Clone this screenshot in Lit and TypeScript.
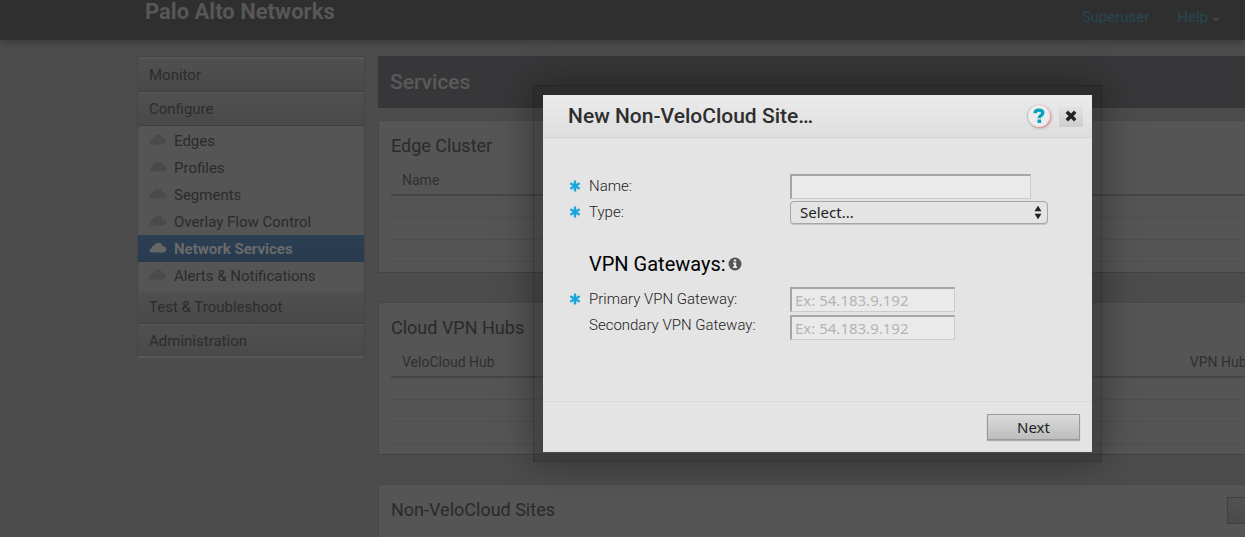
import { LitElement, html, css, svg } from "lit";
import { customElement, state } from "lit/decorators.js";

interface NavItem {
  label: string;
  active?: boolean;
}

interface Card {
  title: string;
  columns: string[];
  rows: number;
  action?: string;
}

const CONFIGURE_ITEMS: NavItem[] = [
  { label: "Edges" },
  { label: "Profiles" },
  { label: "Segments" },
  { label: "Overlay Flow Control" },
  { label: "Network Services", active: true },
  { label: "Alerts & Notifications" },
];

const CARDS: Card[] = [
  { title: "Edge Cluster", columns: ["Name"], rows: 3 },
  { title: "Cloud VPN Hubs", columns: ["VeloCloud Hub", "VPN Hub"], rows: 3 },
  { title: "Non-VeloCloud Sites", columns: ["Name"], rows: 3, action: "New..." },
];

@customElement("side-nav")
export class SideNav extends LitElement {
  static styles = css`
    :host {
      display: block;
    }
    .nav {
      border: 1px solid #454545;
      border-bottom-color: #5a5a5a;
      background: #555;
      padding: 1px 0;
      font-size: 15px;
    }
    .section {
      display: flex;
      align-items: center;
      box-sizing: border-box;
      height: 34px;
      padding: 0 11px;
      color: #2c2c2c;
      text-decoration: none;
      background: linear-gradient(#505050, #494949);
      border-bottom: 1px solid #3f3f3f;
      border-top: 1px solid #575757;
    }
    .section.last {
      height: 32px;
      border-bottom: 0;
    }
    .items {
      list-style: none;
      margin: 0;
      padding: 1px 0;
    }
    .item {
      display: flex;
      align-items: center;
      gap: 7px;
      height: 27px;
      padding: 0 11px;
      color: #2b2b2b;
      text-decoration: none;
    }
    .item.active {
      background: linear-gradient(#2c4054, #293a4d);
      color: #6a6a6a;
      font-weight: 700;
    }
    .cloud {
      width: 18px;
      height: 11px;
      margin-bottom: 2px;
      fill: #4a4a4a;
    }
    .active .cloud {
      fill: #666;
    }
  `;

  render() {
    return html`
      <nav class="nav">
        <a class="section" href="#monitor">Monitor</a>
        <a class="section" href="#configure">Configure</a>
        <ul class="items">
          ${CONFIGURE_ITEMS.map(
            (item) => html`<li>
              <a class="item ${item.active ? "active" : ""}" href="#services">
                <svg class="cloud" viewBox="0 0 19 12" aria-hidden="true">
                  <path
                    d="M3 11.500C1.300 11.500 .3 10.500 .3 9.200c0-1.300 1-2.200 2.200-2.300C2.500 5 3.700 4 5.300 4.200 6 2 7.500.8 9.700.8c2.300 0 4 1.300 4.500 3.500 2.600 0 4.500 1.500 4.500 3.700 0 2.100-1.500 3.500-3.800 3.500z"
                  />
                </svg>
                <span>${item.label}</span>
              </a>
            </li>`
          )}
        </ul>
        <a class="section" href="#test">Test &amp; Troubleshoot</a>
        <a class="section last" href="#admin">Administration</a>
      </nav>
    `;
  }
}

@customElement("service-card")
export class ServiceCard extends LitElement {
  static properties = { card: { attribute: false } };
  declare card: Card;

  static styles = css`
    :host {
      display: block;
    }
    .card {
      background: #555;
      border: 1px solid #494949;
      border-bottom-color: #424242;
      padding: 11px 12px 10px;
    }
    .head {
      display: flex;
      justify-content: space-between;
      align-items: center;
      height: 28px;
    }
    .title {
      margin: 0;
      font-size: 18px;
      line-height: 28px;
      font-weight: 400;
      color: #2a2a2a;
    }
    .action {
      box-sizing: border-box;
      height: 27px;
      width: 258px;
      border: 1px solid #404040;
      background: linear-gradient(#525252, #4a4a4a);
      color: #2a2a2a;
      font: 14px Roboto, sans-serif;
    }
    .table {
      width: 100%;
      border-collapse: separate;
      border-spacing: 0;
      table-layout: fixed;
      font-size: 14px;
    }
    .col {
      box-sizing: content-box;
      height: 26px;
      padding: 7px 11px 1px;
      text-align: left;
      font-weight: 400;
      line-height: 26px;
      color: #303030;
      border-bottom: 2px solid #464646;
    }
    .col.first {
      width: 70%;
    }
    .cell {
      height: 21px;
      padding: 0;
      border-bottom: 1px solid #4f4f4f;
    }
  `;

  render() {
    const { title, columns, rows, action } = this.card;
    return html`
      <section class="card">
        <div class="head">
          <h2 class="title">${title}</h2>
          ${action ? html`<button class="action">${action}</button>` : ""}
        </div>
        <table class="table">
          <thead>
            <tr>
              ${columns.map(
                (c, i) => html`<th class="col ${i === 0 ? "first" : ""}">${c}</th>`
              )}
            </tr>
          </thead>
          <tbody>
            ${Array.from(
              { length: rows },
              () => html`<tr>
                ${columns.map(() => html`<td class="cell"></td>`)}
              </tr>`
            )}
          </tbody>
        </table>
      </section>
    `;
  }
}

const asterisk = html`<svg class="star" viewBox="-6 -6 12 12" aria-hidden="true">
  ${[0, 60, 120].map(
    (a) => svg`<rect x="-1.200" y="-5.500" width="2.400" height="11" rx=".6" transform="rotate(${a})" />`
  )}
</svg>`;

@customElement("site-dialog")
export class SiteDialog extends LitElement {
  @state() private name = "";

  static styles = css`
    :host {
      display: block;
    }
    .frame {
      padding: 9px;
      border: 1px solid rgba(0, 0, 0, 0.3);
      background: rgba(0, 0, 0, 0.2);
      background-clip: padding-box;
      box-shadow: 0 0 36px rgba(0, 0, 0, 0.35);
    }
    .dialog {
      background: #e4e4e4;
      color: #333;
      width: 549px;
    }
    .head {
      display: flex;
      align-items: center;
      box-sizing: border-box;
      height: 43px;
      padding: 0 9px 0 25px;
      background: linear-gradient(#ebebeb, #dedede);
      border-bottom: 1px solid #d2d2d2;
    }
    .title {
      flex: 1;
      margin: 0;
      font-size: 21px;
      font-weight: 500;
      color: #2e2e2e;
    }
    .help {
      width: 22px;
      height: 22px;
      padding: 0;
      border: 0;
      border-radius: 50%;
      background: #ececec;
      box-shadow: 1px 1px 3px rgba(190, 60, 60, 0.6), -1px 0 1px rgba(60, 170, 200, 0.3);
      margin-right: 9px;
    }
    .close {
      width: 24px;
      height: 21px;
      padding: 0;
      border: 0;
      background: linear-gradient(#e4e4e4, #cdcdcd);
    }
    .icon {
      display: block;
      margin: auto;
    }
    .form {
      display: block;
      padding: 35px 25px 58px 26px;
    }
    .row {
      display: grid;
      grid-template-columns: 20px 201px 1fr;
      align-items: center;
      height: 26px;
    }
    .gateways {
      display: grid;
      gap: 2px;
    }
    .gateways .row {
      height: 28px;
    }
    .row.optional {
      align-items: start;
    }
    .star {
      width: 12px;
      height: 12px;
      fill: #1aa6dc;
    }
    .label {
      grid-column: 2;
      font-size: 15px;
      line-height: 20px;
      font-weight: 300;
      color: #222;
    }
    .box {
      box-sizing: border-box;
      height: 25px;
      margin: 0;
      padding: 0 3px;
      border: 2px solid #a5a5a5;
      border-right: 1px solid #ccc;
      border-bottom: 1px solid #ccc;
      background: #eaeaea;
      color: #222;
      font: 15px "Noto Sans", sans-serif;
    }
    .box::placeholder {
      color: #b4b4b4;
      opacity: 1;
    }
    .wide {
      width: 241px;
    }
    .short {
      width: 165px;
    }
    .picker {
      position: relative;
      width: 258px;
    }
    .select {
      appearance: none;
      display: block;
      box-sizing: border-box;
      width: 100%;
      height: 23px;
      padding: 0 9px;
      border: 1px solid #a6a6a6;
      border-radius: 4px;
      background: #e4e4e4;
      box-shadow: 0 1px 0 #c4c4c4;
      color: #222;
      font: 15px "Noto Sans", sans-serif;
    }
    .arrows {
      position: absolute;
      right: 6px;
      top: 4px;
      pointer-events: none;
      fill: #222;
    }
    .subhead {
      display: flex;
      align-items: center;
      gap: 2px;
      margin: 25px 0 8px 20px;
      height: 27px;
      font-size: 20px;
      font-weight: 400;
      color: #000;
    }
    .foot {
      display: flex;
      justify-content: flex-end;
      padding: 12px;
      border-top: 1px solid #dadada;
    }
    .next {
      box-sizing: border-box;
      width: 93px;
      height: 26px;
      border: 1px solid #999;
      background: linear-gradient(#dadada, #bdbdbd);
      box-shadow: 0 1px 1px rgba(0, 0, 0, 0.25);
      color: #222;
      font: 15px "Noto Sans", sans-serif;
      padding: 0;
    }
  `;

  private onName(e: Event) {
    this.name = (e.target as HTMLInputElement).value;
  }

  render() {
    return html`
      <div class="frame">
        <div class="dialog" role="dialog" aria-labelledby="title">
          <header class="head">
            <h1 class="title" id="title">New Non-VeloCloud Site…</h1>
            <button class="help" aria-label="Help">
              <svg class="icon" width="12" height="16" viewBox="0 0 12 16">
                <path
                  d="M2 5.300C2 2.900 3.600 2.100 5.900 2.100s3.900 1 3.900 2.900c0 2.500-3.500 2.500-3.500 5.200"
                  fill="none"
                  stroke="#07a0c3"
                  stroke-width="3.400"
                />
                <rect x="4.500" y="11.500" width="3.600" height="3.400" fill="#07a0c3" />
              </svg>
            </button>
            <button class="close" aria-label="Close">
              <svg class="icon" width="12" height="12" viewBox="0 0 12 12">
                <path
                  d="M3 3 9 9M9 3 3 9"
                  stroke="#222"
                  stroke-width="3.400"
                  stroke-linecap="square"
                />
              </svg>
            </button>
          </header>
          <form class="form">
            <div class="row">
              ${asterisk}
              <label class="label" for="name">Name:</label>
              <input class="box wide" id="name" type="text" .value=${this.name} @input=${this.onName} />
            </div>
            <div class="row">
              ${asterisk}
              <label class="label" for="type">Type:</label>
              <div class="picker">
                <select class="select" id="type">
                  <option>Select...</option>
                </select>
                <svg class="arrows" width="8" height="15" viewBox="0 0 8 15" aria-hidden="true">
                  <path d="M4 .8 7.500 6.200H.5zM4 14.200 .5 8.800h7z" />
                </svg>
              </div>
            </div>
            <h2 class="subhead">
              VPN Gateways:
              <svg width="14" height="14" viewBox="0 0 14 14" aria-hidden="true">
                <circle cx="7" cy="7" r="6.500" fill="#555" />
                <path d="M5.800 2.500h2.400v2H5.800zM5 5.600h3.200v4h.9v1.500H5V9.600h.9V7.100H5z" fill="#e8e8e8" />
              </svg>
            </h2>
            <div class="gateways">
              <div class="row">
                ${asterisk}
                <label class="label" for="primary">Primary VPN Gateway:</label>
                <input class="box short" id="primary" type="text" placeholder="Ex: 54.183.9.192" />
              </div>
              <div class="row optional">
                <label class="label" for="secondary">Secondary VPN Gateway:</label>
                <input class="box short" id="secondary" type="text" placeholder="Ex: 54.183.9.192" />
              </div>
            </div>
          </form>
          <footer class="foot">
            <button class="next">Next</button>
          </footer>
        </div>
      </div>
    `;
  }
}

@customElement("app-root")
export class AppRoot extends LitElement {
  static styles = css`
    :host {
      display: block;
      position: relative;
      height: 100vh;
      overflow: hidden;
      background: #4c4c4c;
      font-family: Roboto, sans-serif;
    }
    .topbar {
      display: flex;
      justify-content: space-between;
      align-items: flex-start;
      box-sizing: border-box;
      height: 40px;
      padding: 0 25px 0 145px;
      background: #2f2f2f;
      box-shadow: 0 2px 8px rgba(0, 0, 0, 0.25);
    }
    .brand {
      font-size: 22px;
      line-height: 24px;
      font-weight: 700;
      color: #575757;
    }
    .account {
      display: flex;
      gap: 28px;
      font-size: 15px;
      line-height: 34px;
    }
    .link {
      display: flex;
      align-items: center;
      gap: 4px;
      color: #27474f;
      text-decoration: none;
    }
    .caret {
      fill: #444;
      margin-top: 5px;
    }
    .canvas {
      box-sizing: border-box;
      min-width: 1635px;
      padding: 16px 137px 0;
      display: grid;
      grid-template-columns: 228px 1fr;
      gap: 13px;
      align-items: start;
    }
    .content {
      display: flex;
      flex-direction: column;
      gap: 29px;
    }
    .banner {
      display: flex;
      align-items: center;
      height: 52px;
      padding: 0 12px;
      margin: 0 0 -17px;
      background: #373739;
      color: #5a5a5a;
      font-size: 21px;
      font-weight: 500;
    }
    .overlay {
      position: absolute;
      top: 0;
      left: 0;
      width: 100%;
      min-width: 1635px;
      display: flex;
      justify-content: center;
      padding-top: 85px;
      box-sizing: border-box;
    }
  `;

  render() {
    return html`
      <header class="topbar">
        <div class="brand">Palo Alto Networks</div>
        <nav class="account">
          <a class="link" href="#user">Superuser</a>
          <a class="link" href="#help">
            Help
            <svg class="caret" width="8" height="4" viewBox="0 0 9 5" aria-hidden="true">
              <path d="M0 0h9L4.500 5z" />
            </svg>
          </a>
        </nav>
      </header>
      <div class="canvas">
        <side-nav></side-nav>
        <main class="content">
          <h1 class="banner">Services</h1>
          ${CARDS.map((card) => html`<service-card .card=${card}></service-card>`)}
        </main>
      </div>
      <div class="overlay"><site-dialog></site-dialog></div>
    `;
  }
}
